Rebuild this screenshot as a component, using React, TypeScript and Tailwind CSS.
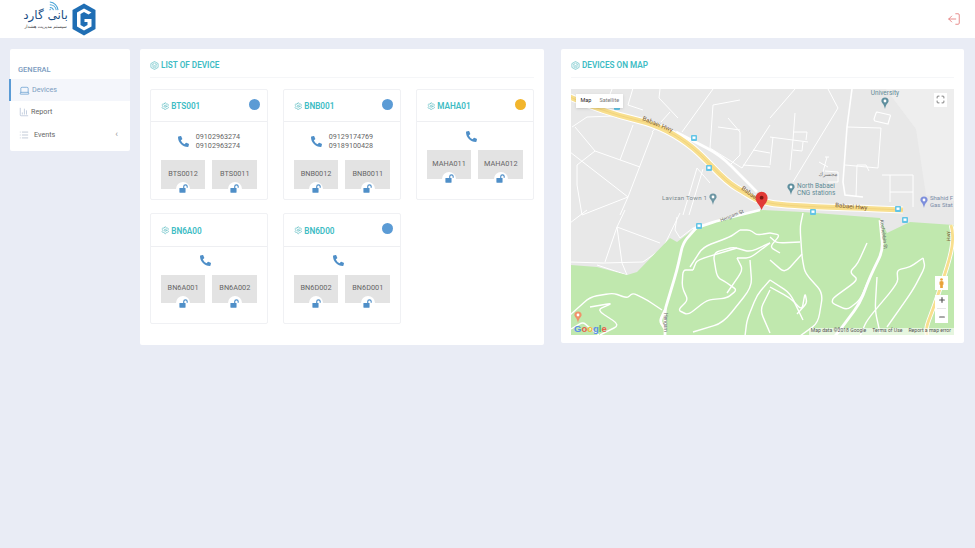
import { BarChart3, Laptop, List, LogOut, Maximize, Minus, Plus, Settings } from 'lucide-react'
import { FaPhoneAlt } from 'react-icons/fa'

type Device = { name: string; status?: string; phones?: string[]; relays: string[] }

const devices: Device[] = [
  { name: 'BTS001', status: 'bg-[#5b9bd5]', phones: ['09102963274', '09102963274'], relays: ['BTS0012', 'BTS0011'] },
  { name: 'BNB001', status: 'bg-[#5b9bd5]', phones: ['09129174769', '09189100428'], relays: ['BNB0012', 'BNB0011'] },
  { name: 'MAHA01', status: 'bg-[#f2b52c]', relays: ['MAHA011', 'MAHA012'] },
  { name: 'BN6A00', relays: ['BN6A001', 'BN6A002'] },
  { name: 'BN6D00', status: 'bg-[#5b9bd5]', relays: ['BN6D002', 'BN6D001'] },
]

const thinRoads = [
  '1,38 16,28 42,27', '4,38 24,62', '24,62 69,78', '-1,63 57,108', '24,62 6,76 6,96 11,126', '11,126 57,108',
  '82,43 57,108 49,126', '62,36 49,71', '62,-1 57,16 72,21', '41,0 36,13', '99,23 81,43', '89,0 88,9 107,29',
  '142,0 111,43', '142,16 139,59 171,79', '142,16 169,11', '157,29 169,43 169,66 159,76', '147,38 169,41',
  '199,36 171,79', '182,61 199,64', '172,76 199,78', '126,79 112,126', '132,80 118,126', '126,79 139,94',
  '-1,173 32,174 72,173 92,159 109,124', '54,121 46,138 34,173', '46,138 51,174 56,186 91,219', '46,138 89,154',
  '26,176 56,186', '16,121 -1,134', '106,128 104,141 109,149 122,139',
  '224,0 199,29', '257,0 267,19 222,93', '224,24 222,51 219,81', '199,48 237,53', '222,43 236,43 235,51',
  '222,61 231,62 232,53', '202,48 199,76', '254,68 258,68', '256,68 252,83', '248,73 257,78', '254,82 267,83 267,93 257,93',
  '276,38 310,39 307,79 274,76', '285,108 286,76 295,76 298,82', '311,86 342,86 342,118', '319,86 319,113', '319,103 342,103',
]

const greenRoads = [
  '-1,226 19,208 42,204 56,209 62,204 76,211 91,221', '19,218 42,214 26,221 49,236 29,246', '0,240 12,233 20,240 28,246',
  '122,181 112,181 111,198 117,211 107,221 117,226 136,211 156,209 166,201 156,194 146,188 142,164 162,158 179,163 199,154',
  '122,181 126,171 166,159', '169,141 179,141 186,146 199,144', '119,178 132,158 159,148 169,141',
  '166,169 172,181 156,204', '179,171 181,198 152,234 122,243', '199,191 186,206 176,231 174,247',
  '199,154 179,169 166,169', '199,201 189,221 199,244', '232,124 229,138 231,168 234,184 252,204 247,234 229,247',
  '199,144 209,146 199,158 209,164', '229,153 206,154 199,148', '231,165 214,184 199,171',
  '199,198 219,209 231,221 234,204 236,214 226,225', '199,191 219,204 232,231',
  '296,154 287,174 279,183 287,191 262,209 261,214 276,221 289,211 299,188',
  '352,169 339,178 326,181 327,194 296,231 289,247', '352,169 354,178 342,201 316,238', '306,188 304,221 309,244',
]

const wideRoads = [
  '105,43 149,66 186,103', '122,140 149,131 189,121', '126,138 112,154 106,181 97,211 94,221 94,247',
  '94,221 89,232 94,240', '309,131 312,161 299,188 289,214 269,241 264,247',
]

const highway = 'M-1 8C20 18 45 26 66 31S105 45 122 59 150 90 166 99 180 110 199 114 266 118 332 121 383 129'
const branch = 'M380 136C384 150 380 165 376 178S364 215 359 228 356 240 356 247'

const transit = ['46,18', '123,49', '138,79', '242,123', '327,120', '334,131', '128,137']

const toPath = (points: string) => 'M' + points.split(' ').join('L')

// keeps each segment straight and only rounds a short stretch at the corner
const toRoundedPath = (points: string) => {
  const pts = points.split(' ').map((p) => p.split(',').map(Number))
  let d = `M${pts[0][0]} ${pts[0][1]}`
  for (let i = 1; i < pts.length - 1; i++) {
    const [cx, cy] = pts[i]
    const ax = cx + (pts[i - 1][0] - cx) * 0.3
    const ay = cy + (pts[i - 1][1] - cy) * 0.3
    const bx = cx + (pts[i + 1][0] - cx) * 0.3
    const by = cy + (pts[i + 1][1] - cy) * 0.3
    d += `L${ax} ${ay}Q${cx} ${cy} ${bx} ${by}`
  }
  const last = pts[pts.length - 1]
  return d + `L${last[0]} ${last[1]}`
}

function TitleIcon({ className }: { className: string }) {
  return (
    <svg viewBox="0 0 12 12" className={className} fill="none" stroke="currentColor" strokeWidth="0.9">
      <path d="M6 .7 10.8 3.4V8.6L6 11.3 1.2 8.6V3.4Z" />
      <path d="M6 2.8 9 4.4 6 6 3 4.4ZM3 6.1 6 7.7 9 6.1M3 7.6 6 9.2 9 7.6" strokeWidth="0.7" />
    </svg>
  )
}

function OpenLock() {
  return (
    <svg viewBox="0 0 11 11" className="h-[9px] w-[9px] text-[#4f8fc8]">
      <rect x="0.5" y="5" width="7.5" height="5.8" rx="0.6" fill="currentColor" />
      <path d="M5.8 5V3.2A2.1 2.1 0 0 1 10 3.200V4.500" fill="none" stroke="currentColor" strokeWidth="1.4" />
    </svg>
  )
}

function MapPin({ x, y, color }: { x: number; y: number; color: string }) {
  return (
    <g transform={`translate(${x} ${y})`}>
      <path d="M0 5C-1-.5-3.6-1-3.6-3A3.6 3.6 0 0 1 3.6-3C3.6-1 1-.5 0 5Z" fill={color} />
      <circle cx="0" cy="-3" r="1.4" fill="#ffffff" />
    </g>
  )
}

function RoadMap() {
  return (
    <svg viewBox="0 0 383 246" className="block h-full w-full bg-[#e8e8e8]" style={{ fontFamily: 'Roboto, sans-serif' }}>
      <path d="M315 0H383V112L355 106 345 40Z" fill="#eeeeee" />
      <g fill="none" stroke="#ffffff" strokeWidth="1" strokeLinejoin="round">
        {thinRoads.map((d) => <path key={d} d={toPath(d)} />)}
      </g>
      <path d="M306,23 319,26 Q320,27 319,28L317,35 304,32 Q303,31 303,30L305,24Z" fill="none" stroke="#ffffff" strokeWidth="1.2" />
      <path d="M281 0 276 38 272 93 274 106 292 108" fill="none" stroke="#ffffff" strokeWidth="1.6" />
      <path
        d="M-1 176 26 178 56 186 66 183 99 149 106 153 122 141 152 129 189 121 232 123 309 129 316 144 339 133 383 136V247H-1Z"
        fill="#c0e8ae"
      />
      <g fill="none" stroke="#ffffff" strokeWidth="1.4" strokeLinejoin="round">
        {greenRoads.map((d) => <path key={d} d={toRoundedPath(d)} />)}
      </g>
      <g fill="none" stroke="#ffffff" strokeWidth="2.8" strokeLinejoin="round">
        {wideRoads.map((d) => <path key={d} d={toRoundedPath(d)} />)}
      </g>
      <path d={branch} fill="none" stroke="#ffffff" strokeWidth="4.5" />
      <path d={branch} fill="none" stroke="#f8df8e" strokeWidth="2.8" />
      <path d={highway} fill="none" stroke="#ffffff" strokeWidth="7" />
      <path d={highway} fill="none" stroke="#f8df8e" strokeWidth="5" />
      <path d={highway} fill="none" stroke="#eccb70" strokeWidth="0.6" />
      {transit.map((p) => {
        const [x, y] = p.split(',').map(Number)
        return (
          <g key={p}>
            <rect x={x - 3} y={y - 3} width="6" height="6" rx="1" fill="#62c4e6" />
            <rect x={x - 1.5} y={y - 1.5} width="3" height="2.4" fill="#ffffff" />
          </g>
        )
      })}
      <g fontSize="6.2" fill="#7a5a35">
        <text transform="translate(71 31) rotate(22)">Babaei Hwy</text>
        <text transform="translate(170 100) rotate(37)">Babaei</text>
        <text transform="translate(264 118) rotate(5)">Babaei Hwy</text>
        <text transform="translate(379 147) rotate(-96)" fontSize="5.2" textAnchor="middle">Hwy</text>
      </g>
      <g fontSize="5" fill="#666666">
        <text transform="translate(150 133) rotate(-22)">Hengam St</text>
        <text transform="translate(93 224) rotate(90)">Hengam</text>
        <text transform="translate(309 131) rotate(82)">Kochehbin St</text>
        <text transform="translate(268 243) rotate(-58)">St</text>
      </g>
      <text x="91" y="111" fontSize="6.2" fill="#7c8a8e" letterSpacing="0.2">Lavizan Town 1</text>
      <MapPin x={142} y={111} color="#6d96a3" />
      <text x="314" y="6" fontSize="6.5" fill="#5f8a96" textAnchor="middle">University</text>
      <MapPin x={314} y={15} color="#5f8f9e" />
      <text x="226" y="99" fontSize="6.5" fill="#5f8a96">North Babaei</text>
      <text x="226" y="106" fontSize="6.5" fill="#5f8a96">CNG stations</text>
      <MapPin x={220} y={101} color="#5f8f9e" />
      <text x="359" y="111" fontSize="6" fill="#7b8da8">Shahid F</text>
      <text x="359" y="118" fontSize="6" fill="#7b8da8">Gas Stat</text>
      <MapPin x={353} y={114} color="#7e8fdc" />
      <text x="257" y="87" fontSize="5.5" fill="#777777" textAnchor="middle" style={{ fontFamily: '"DejaVu Sans", sans-serif' }}>مجسرك</text>
      <MapPin x={7} y={229} color="#f0936a" />
      <path d="M190.6 121C188.8 115.5 184.6 113.8 184.6 108.7A6 6 0 0 1 196.6 108.7C196.6 113.8 192.4 115.5 190.6 121Z" fill="#e13a36" />
      <circle cx="190.6" cy="108.7" r="1.9" fill="#7c1512" />
      <text x="3" y="243" fontSize="9.5" fontWeight="700" style={{ fontFamily: '"Liberation Sans", sans-serif' }}>
        <tspan fill="#5a8fe8">G</tspan>
        <tspan fill="#e8604c">o</tspan>
        <tspan fill="#f0b93a">o</tspan>
        <tspan fill="#5a8fe8">g</tspan>
        <tspan fill="#52b468">l</tspan>
        <tspan fill="#e8604c">e</tspan>
      </text>
    </svg>
  )
}

function DeviceCard({ device }: { device: Device }) {
  return (
    <div className="rounded-[2px] border border-[#f0f1f4] bg-white">
      <div className="flex h-[32.5px] items-center justify-between border-b border-[#eeeff2] pl-[9.5px] pr-[6.5px]">
        <div className="flex items-center gap-[2px] pt-[2px] text-[8.2px] font-semibold text-[#3dbcc4]">
          <Settings className="h-[8.5px] w-[8.5px] text-[#5cbcc2]" strokeWidth={1.8} />
          {device.name}
        </div>
        {device.status && <span className={`mb-[2px] h-[11px] w-[11px] rounded-full ${device.status}`} />}
      </div>
      <div className="px-[9.5px] pt-[9.5px]">
        <div className="mb-[9.5px] flex items-center justify-center">
          <FaPhoneAlt className="-my-[1px] mr-[7px] h-[11px] w-[11px] text-[#4f8fc8]" />
          {device.phones && (
            <div className="text-[7.2px] leading-[9.5px] text-[#666666]">
              {device.phones.map((phone, i) => <div key={i}>{phone}</div>)}
            </div>
          )}
        </div>
        <div className="flex gap-[7px]">
          {device.relays.map((relay) => (
            <div key={relay} className="relative flex h-[28.5px] w-[45px] items-center justify-center bg-[#e3e3e3] text-[7.3px] text-[#666666]">
              {relay}
              <span className="absolute left-[15.5px] top-[21.5px] flex h-[14px] w-[14px] items-center justify-center rounded-full bg-white">
                <OpenLock />
              </span>
            </div>
          ))}
        </div>
      </div>
    </div>
  )
}

export default function App() {
  return (
    <div className="min-h-[548px] bg-[#e9ecf5] text-[#555555]" style={{ fontFamily: 'Roboto, sans-serif' }}>
      <header className="flex h-[38px] items-center justify-between bg-white pl-[22px] pr-[14px]">
        <div className="flex items-center gap-[3px]">
          <div className="w-[47px] text-center leading-none">
            <div className="relative whitespace-nowrap text-[12px] leading-[15px] text-[#1c4f86]" dir="rtl" style={{ fontFamily: '"DejaVu Sans", sans-serif' }}>
              بانی گارد
              <svg viewBox="0 0 12 12" className="absolute left-[26px] top-[-7px] h-[11px] w-[11px]" fill="none" stroke="#4aa4d8" strokeWidth="1.1">
                <path d="M2 10A1 1 0 0 1 3 9M2 7A4 4 0 0 1 6 10M2 4A7 7 0 0 1 9 10M2 1A10 10 0 0 1 11 10" />
              </svg>
            </div>
            <div className="mt-[1px] whitespace-nowrap text-[4.5px] leading-[6px] text-[#444444]" dir="rtl" style={{ fontFamily: '"DejaVu Sans", sans-serif' }}>
              سیستم مدیریت هشدار
            </div>
          </div>
          <svg viewBox="0 0 24 33" className="h-[33px] w-[24px]">
            <path d="M12 .5 23.5 7V26L12 32.5 .5 26V7Z" fill="#1f6eb4" />
            <path d="M5 9.5 12 5.500 19.5 9.5 16.500 11.500 12 9 8.500 11V22L12 24 15.500 22V19H12.500V16H19.500V23.500L12 27.500 5 23.500Z" fill="#ffffff" />
          </svg>
        </div>
        <LogOut className="h-[14px] w-[14px] rotate-180 text-[#e57f7f]" strokeWidth={1.5} />
      </header>

      <main className="flex items-start pt-[11px]">
        <aside className="ml-[10px] h-[102px] w-[120px] rounded-[2px] bg-white pt-[16px]">
          <div className="pl-[8px] text-[7.5px] font-medium leading-[9px] text-[#7b9cc0]">GENERAL</div>
          <nav className="mt-[5px] text-[7.2px]">
            <div className="-ml-px flex h-[22px] items-center gap-[2px] border-l-2 border-[#5b9bd5] bg-[#f4f6fb] pl-[8px] text-[#7b9cc0]">
              <Laptop className="h-[11px] w-[11px] text-[#4f8fc8]" strokeWidth={1.4} />
              Devices
            </div>
            <div className="flex h-[22px] items-center gap-[2px] pl-[9px] text-[#666666]">
              <BarChart3 className="h-[10px] w-[10px] text-[#a9b8d0]" strokeWidth={1.6} />
              Report
            </div>
            <div className="flex h-[24px] items-center pl-[9px] pr-[12px] text-[#666666]">
              <List className="mr-[5px] h-[10px] w-[10px] text-[#9aa7bc]" strokeWidth={1.4} />
              Events
              <span className="ml-auto text-[9px] text-[#999999]">‹</span>
            </div>
          </nav>
        </aside>

        <section className="ml-[10px] h-[296px] w-[404px] rounded-[2px] bg-white">
          <div className="mx-[10px] flex h-[29px] items-center gap-[2px] border-b border-[#f5f6f8] pt-[4px] text-[8.2px] font-semibold text-[#3dbcc4]">
            <TitleIcon className="h-[9px] w-[9px] text-[#5cbcc2]" />
            LIST OF DEVICE
          </div>
          <div className="grid grid-cols-[117.5px_117.5px_117.5px] grid-rows-[111.5px_110.5px] gap-x-[15.5px] gap-y-[13px] pl-[10.2px] pt-[10.5px]">
            {devices.map((device) => <DeviceCard key={device.name} device={device} />)}
          </div>
        </section>

        <section className="ml-[17px] h-[294px] w-[403px] rounded-[2px] bg-white px-[10px]">
          <div className="flex h-[29px] items-center gap-[2px] border-b border-[#f5f6f8] pt-[4px] text-[8.2px] font-semibold text-[#3dbcc4]">
            <TitleIcon className="h-[9px] w-[9px] text-[#5cbcc2]" />
            DEVICES ON MAP
          </div>
          <div className="relative mt-[10.5px] h-[246px] w-[383px] overflow-hidden">
            <RoadMap />
            <div className="absolute left-[5px] top-[5px] flex h-[14px] items-center bg-white text-[5.5px] shadow-sm">
              <span className="px-[4.5px] text-[#222222]">Map</span>
              <span className="px-[3.5px] text-[#777777]">Satellite</span>
            </div>
            <div className="absolute right-[7px] top-[4px] flex h-[14px] w-[13px] items-center justify-center bg-white">
              <Maximize className="h-[9px] w-[9px] text-[#555555]" strokeWidth={2} />
            </div>
            <div className="absolute right-[6px] top-[187px] flex h-[14px] w-[13px] items-center justify-center bg-white">
              <svg viewBox="0 0 6 12" className="h-[10px] w-[5px]">
                <circle cx="3" cy="1.8" r="1.6" fill="#e9a23a" />
                <path d="M.6 4.5Q3 2.8 5.4 4.5V8H4.6V12H1.4V8H.6Z" fill="#e9a23a" />
              </svg>
            </div>
            <div className="absolute right-[6px] top-[206px] flex h-[28px] w-[13px] flex-col items-center justify-around bg-white">
              <Plus className="h-[8px] w-[8px] text-[#555555]" strokeWidth={3.5} />
              <span className="h-px w-[9px] bg-[#e6e6e6]" />
              <Minus className="h-[8px] w-[8px] text-[#555555]" strokeWidth={3.5} />
            </div>
            <div className="absolute bottom-0 right-0 flex h-[7px] items-center gap-[6px] bg-white/60 pl-[2px] pr-[3px] text-[5.1px] leading-none text-[#555555]">
              <span>Map data ©2018 Google</span>
              <span>Terms of Use</span>
              <span>Report a map error</span>
            </div>
          </div>
        </section>
      </main>
    </div>
  )
}
